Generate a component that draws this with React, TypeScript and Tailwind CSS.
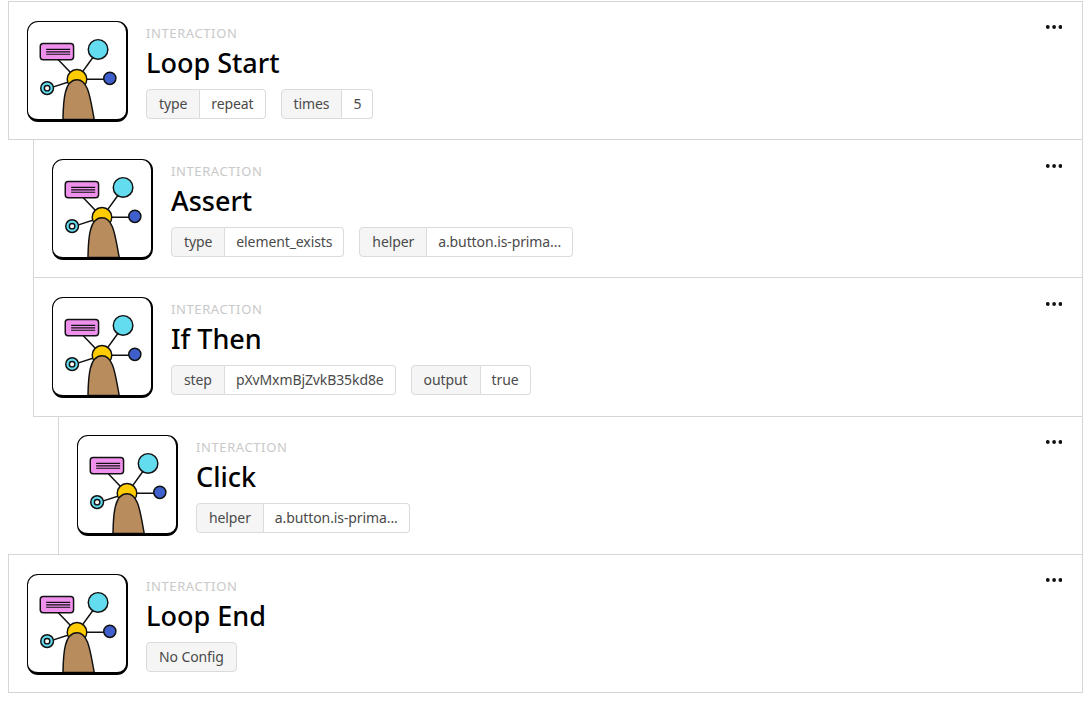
const font = { fontFamily: '"Noto Sans", "Open Sans", sans-serif' };

type Step = {
  title: string;
  indent: string;
  tags: [string, string?][];
};

const steps: Step[] = [
  { title: 'Loop Start', indent: 'ml-0', tags: [['type', 'repeat'], ['times', '5']] },
  { title: 'Assert', indent: 'ml-[25px]', tags: [['type', 'element_exists'], ['helper', 'a.button.is-prima...']] },
  { title: 'If Then', indent: 'ml-[25px]', tags: [['step', 'pXvMxmBjZvkB35kd8e'], ['output', 'true']] },
  { title: 'Click', indent: 'ml-[50px]', tags: [['helper', 'a.button.is-prima...']] },
  { title: 'Loop End', indent: 'ml-0', tags: [['No Config']] },
];

function InteractionIcon() {
  return (
    <div className="w-[101px] h-[101px] shrink-0 rounded-[11px] border border-black border-r-2 border-b-[3px] bg-white overflow-hidden">
      <svg viewBox="0 0 100 98" width="98" height="97" className="block">
        <g stroke="#111" strokeWidth="1.5" fill="none">
          <path d="M29 36 L50 58 L66 36 M50 58 H78 M50 58 L22 67" />
          <rect x="12.5" y="21.5" width="34" height="16.5" rx="3" fill="#ee90ec" />
          <path d="M18.5 27.5 H43 M18.5 30 H43 M18.5 32.4 H43" strokeWidth="1.2" />
          <circle cx="71.5" cy="27.5" r="10" fill="#62dcee" />
          <circle cx="83.5" cy="57" r="6.2" fill="#3f5fcc" />
          <circle cx="19.5" cy="67" r="6.5" fill="#62dcee" />
          <circle cx="19.5" cy="67" r="2.8" fill="#fff" />
          <circle cx="50" cy="58" r="10" fill="#ffcc00" />
          <path d="M35.7 99 C36 80 37 58.5 50 58.5 C62 58.5 63.5 78 67.6 99 Z" fill="#b98c5e" />
        </g>
      </svg>
    </div>
  );
}

function Tag({ name, value }: { name: string; value?: string }) {
  return (
    <div className="flex h-[30px] text-[14px] tracking-[-0.1px] text-[#4a4a4a] leading-[28px]">
      <span className={`px-3 bg-[#f5f5f5] border border-[#dbdbdb] ${value ? 'rounded-l-[4px]' : 'rounded-[4px]'}`}>
        {name}
      </span>
      {value && (
        <span className="px-[11px] bg-white border border-l-0 border-[#dbdbdb] rounded-r-[4px]">{value}</span>
      )}
    </div>
  );
}

function StepRow({ step, first }: { step: Step; first: boolean }) {
  return (
    <div
      className={`${step.indent} ${
        first ? '' : '-mt-px'
      } h-[139.2px] relative flex items-start gap-[18px] pl-[18px] pt-[18.8px] border border-[#d6d6d6] bg-white`}
    >
      <InteractionIcon />
      <div className="flex flex-col pt-[3px]">
        <div className="text-[13px] leading-[18px] tracking-[0.6px] text-[#c9c9c9] uppercase">Interaction</div>
        <div className="text-[27px] leading-[36px] font-medium text-black mt-[3px] mb-[8px]">{step.title}</div>
        <div className="flex gap-[15px]">
          {step.tags.map(([name, value]) => (
            <Tag key={name} name={name} value={value} />
          ))}
        </div>
      </div>
      <svg width="16" height="4" viewBox="0 0 16 4" className="absolute right-[20px] top-[23.4px]" fill="#111">
        <circle cx="1.8" cy="2" r="1.9" />
        <circle cx="8.1" cy="2" r="1.9" />
        <circle cx="14.4" cy="2" r="1.9" />
      </svg>
    </div>
  );
}

export default function App() {
  return (
    <div className="w-[1089px] h-[701px] bg-white pt-px pl-2 pr-[6px] overflow-hidden" style={font}>
      {steps.map((step, i) => (
        <StepRow key={step.title} step={step} first={i === 0} />
      ))}
    </div>
  );
}
